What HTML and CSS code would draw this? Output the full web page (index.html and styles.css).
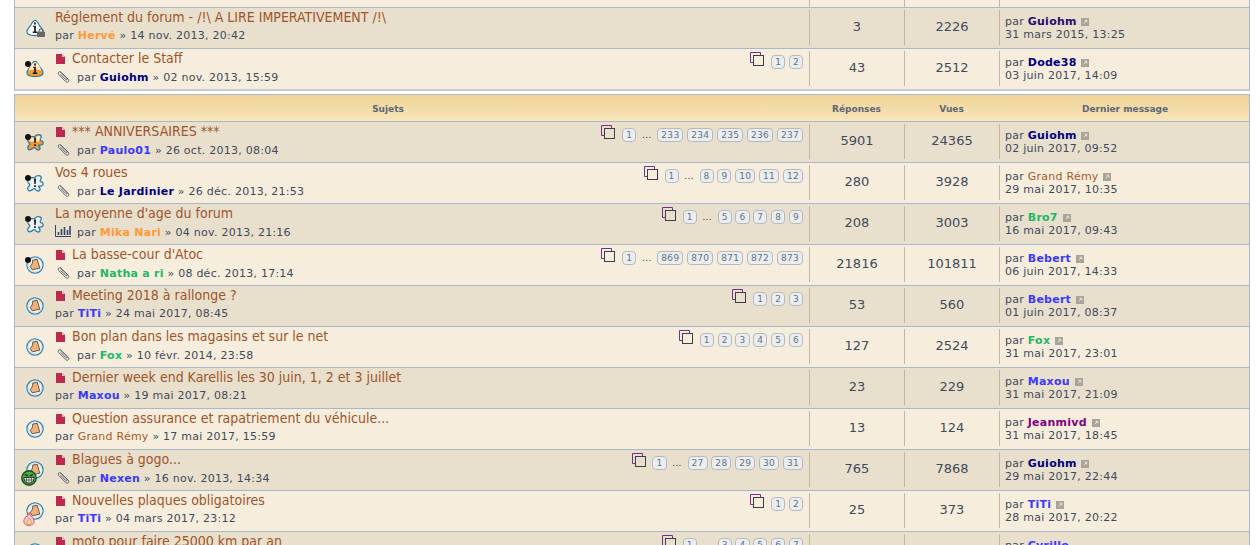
FILE: index.html
```html
<!DOCTYPE html>
<html lang="fr">
<head>
<meta charset="utf-8">
<title>Forum</title>
<link rel="stylesheet" href="styles.css">
</head>
<body>
<svg class="defs" aria-hidden="true">
  <symbol id="file" viewBox="0 0 9 10"><path d="M0 0H6L9 3V10H0Z" fill="#bc2a4d"/><path d="M6 0V3H9Z" fill="#eec4cc"/></symbol>
  <symbol id="clip" viewBox="0 0 13 13"><path d="M3 1.500 11.200 9.200C13 11.500 10.400 13.400 8.600 11.500L1.600 4.400C.4 2.800 2 .9 3.600 2L10 8.300C10.800 9.400 9.700 10.300 8.800 9.500L3.600 4.300" fill="none" stroke="#5d6670" stroke-width="1"/></symbol>
  <symbol id="poll" viewBox="0 0 16 12"><path d="M.5 0V11.500H16" fill="none" stroke="#38406e" stroke-width="1"/><path d="M3.500 7V10M6.500 4V10M9.500 2V10M12.500 5V10M15 1V10" fill="none" stroke="#38406e" stroke-width="1.600"/></symbol>
  <symbol id="copy" viewBox="0 0 14 14"><path d="M3.500 10.500H.5V.5H10.500V3.500" fill="none" stroke="#7b2d8b"/><rect x="3.500" y="3.500" width="10" height="10" fill="none" stroke="#3a3f4a"/></symbol>
  <symbol id="go" viewBox="0 0 9 9"><rect width="9" height="9" fill="#a9a39a"/><path d="M3 6 6 3M4 2.500H6.500V5" fill="none" stroke="#f2eee6"/></symbol>
  <symbol id="info" viewBox="0 0 20 20"><path d="M10 1.500C12 1.500 13 3.500 14.500 6.500C16 9 19 11.500 19 14C19 17 16 18.500 10 18.500C4 18.500 1 17 1 14C1 11.500 4 9 5.500 6.500C7 3.500 8 1.500 10 1.500Z" fill="#fbfbfb" stroke="#2a7ca8" stroke-width="1.300"/><path d="M8 7.500H11V14H12.500V15.500H7.500V14H9V9H8ZM9 4H11V6H9Z" fill="#222"/></symbol>
  <symbol id="info-hot" viewBox="0 0 20 20"><path d="M10 1.500C12 1.500 13 3.500 14.500 6.500C16 9 19 11.500 19 14C19 17 16 18.500 10 18.500C4 18.500 1 17 1 14C1 11.500 4 9 5.500 6.500C7 3.500 8 1.500 10 1.500Z" fill="#f79a2e" stroke="#2a7ca8" stroke-width="1.300"/><path d="M3 12C7 10 13 10 17 12C15 5 12 2.500 10 2.500C8 2.500 5 5 3 12Z" fill="#fde9c6"/><path d="M8 7.500H11V14H12.500V15.500H7.500V14H9V9H8ZM9 4H11V6H9Z" fill="#222"/></symbol>
  <symbol id="lock" viewBox="0 0 9 10"><path d="M2.500 4V2.500C2.500.5 6.500.5 6.500 2.500V4" fill="none" stroke="#555" stroke-width="1.200"/><rect y="4" width="9" height="6" rx="1" fill="#666"/></symbol>
  <symbol id="splat" viewBox="0 0 20 20"><path d="M4 5C6 3 8 5 10 3.500C12 1 17 1 17 4C17 6 15 7 16 8.500C18 8.500 20 10 18.500 12.500C17 14 15 13 14 13.500C14 15 17 16 15 18.500C13 19.500 11 18 10 16.500C8 15.500 6 19.500 3 18.500C1 17 2 14 4 13C5 11 2 10.500 2 8.500C2 6.500 3 6 4 5Z" fill="#eef1f3" stroke="#2a7ca8" stroke-width="1.400"/><path d="M8.800 5H11.200L10.800 11H9.200ZM9 12.500H11V14.500H9Z" fill="#222"/></symbol>
  <symbol id="splat-hot" viewBox="0 0 20 20"><path d="M4 5C6 3 8 5 10 3.500C12 1 17 1 17 4C17 6 15 7 16 8.500C18 8.500 20 10 18.500 12.500C17 14 15 13 14 13.500C14 15 17 16 15 18.500C13 19.500 11 18 10 16.500C8 15.500 6 19.500 3 18.500C1 17 2 14 4 13C5 11 2 10.500 2 8.500C2 6.500 3 6 4 5Z" fill="#f79a2e" stroke="#2a7ca8" stroke-width="1.400"/><path d="M4 6C6 4 8 6 10 5C12 3 16 2.500 16 4.500C16 6.500 14 8 15 9.500H4Z" fill="#fbe6c3"/><path d="M8.800 5H11.200L10.800 11H9.200ZM9 12.500H11V14.500H9Z" fill="#222"/></symbol>
  <symbol id="note" viewBox="0 0 20 20"><circle cx="10" cy="10" r="9" fill="#f6f3ea" stroke="#2f86b5" stroke-width="1.400"/><circle cx="10" cy="10" r="7.700" fill="none" stroke="#c9dde6" stroke-width="1"/><path d="M7.500 4.500 12.500 3.800 15.300 13.500 7 15.300 4.500 11.500C6.500 10.500 7.500 8 7.500 4.500Z" fill="#f0b27c" stroke="#5a4a3a" stroke-width="1"/></symbol>
  <symbol id="dot" viewBox="0 0 6 6"><circle cx="3" cy="3" r="3" fill="#111"/></symbol>
  <symbol id="grin" viewBox="0 0 16 16"><circle cx="8" cy="8" r="7.200" fill="#45b03e" stroke="#1d4d1a" stroke-width="1.400"/><path d="M3 7.500H13C13 11.500 11 13 8 13C5 13 3 11.500 3 7.500Z" fill="#fff" stroke="#111" stroke-width=".8"/><path d="M5.500 8V12.500M8 8V13M10.500 8V12.500M3 10H13" stroke="#111" stroke-width=".6"/><path d="M4 4.500 7 6M12 4.500 9 6" stroke="#111" stroke-width="1.200"/></symbol>
  <symbol id="flame" viewBox="0 0 14 16"><path d="M7 .5C8 4 12 6 13 10C13.500 13 11 15.500 7 15.500C3 15.500 .5 13 1 10C1.500 7 3 7 3.500 4.500C5 6 6.500 4 7 .5Z" fill="#f7c6c6" stroke="#d9476b"/><path d="M7 7C8 9 10 10 10 12C10 14 8 14.500 7 14.500C5 14.500 4 13 4.500 11.500C5.500 11 6.500 9.500 7 7Z" fill="#f5dc90" stroke="#e0602a" stroke-width=".6"/></symbol>
</svg>

<div class="page">
  <div class="block block-top">
    <div class="row row-clipped">
      <div class="topic"></div><div class="num"></div><div class="num"></div><div class="last"></div>
    </div>
    <div class="row alt">
      <div class="topic"><span class="state"><svg class="ic20"><use href="#info"/></svg><svg class="badge-lock"><use href="#lock"/></svg></span>
        <div class="text"><div class="title">Réglement du forum - /!\ A LIRE IMPERATIVEMENT /!\</div><div class="meta">par <b class="orange">Hervé</b> » 14 nov. 2013, 20:42</div></div></div>
      <div class="num">3</div><div class="num">2226</div>
      <div class="last"><div>par <b class="indigo">Guiohm</b> <svg class="go"><use href="#go"/></svg></div><div>31 mars 2015, 13:25</div></div>
    </div>
    <div class="row">
      <div class="topic"><span class="state"><svg class="ic20"><use href="#info-hot"/></svg><svg class="badge-dot"><use href="#dot"/></svg></span>
        <div class="text"><div class="title"><svg class="file"><use href="#file"/></svg>Contacter le Staff</div><div class="meta"><svg class="clip"><use href="#clip"/></svg>par <b class="navy">Guiohm</b> » 02 nov. 2013, 15:59</div></div>
        <div class="pages"><svg class="copy"><use href="#copy"/></svg><a>1</a><a>2</a></div></div>
      <div class="num">43</div><div class="num">2512</div>
      <div class="last"><div>par <b class="navy">Dode38</b> <svg class="go"><use href="#go"/></svg></div><div>03 juin 2017, 14:09</div></div>
    </div>
  </div>

  <div class="block">
    <div class="head"><div class="h-topic">Sujets</div><div class="h-num">Réponses</div><div class="h-num">Vues</div><div class="h-last">Dernier message</div></div>

    <div class="row alt">
      <div class="topic"><span class="state"><svg class="ic20"><use href="#splat-hot"/></svg><svg class="badge-dot"><use href="#dot"/></svg></span>
        <div class="text"><div class="title"><svg class="file"><use href="#file"/></svg>*** ANNIVERSAIRES ***</div><div class="meta"><svg class="clip"><use href="#clip"/></svg>par <b class="blue">Paulo01</b> » 26 oct. 2013, 08:04</div></div>
        <div class="pages"><svg class="copy"><use href="#copy"/></svg><a>1</a><i>...</i><a>233</a><a>234</a><a>235</a><a>236</a><a>237</a></div></div>
      <div class="num">5901</div><div class="num">24365</div>
      <div class="last"><div>par <b class="navy">Guiohm</b> <svg class="go"><use href="#go"/></svg></div><div>02 juin 2017, 09:52</div></div>
    </div>
    <div class="row">
      <div class="topic"><span class="state"><svg class="ic20"><use href="#splat"/></svg><svg class="badge-dot"><use href="#dot"/></svg></span>
        <div class="text"><div class="title">Vos 4 roues</div><div class="meta"><svg class="clip"><use href="#clip"/></svg>par <b class="navy">Le Jardinier</b> » 26 déc. 2013, 21:53</div></div>
        <div class="pages"><svg class="copy"><use href="#copy"/></svg><a>1</a><i>...</i><a>8</a><a>9</a><a>10</a><a>11</a><a>12</a></div></div>
      <div class="num">280</div><div class="num">3928</div>
      <div class="last"><div>par <span class="brown">Grand Rémy</span> <svg class="go"><use href="#go"/></svg></div><div>29 mai 2017, 10:35</div></div>
    </div>
    <div class="row alt">
      <div class="topic"><span class="state"><svg class="ic20"><use href="#splat"/></svg><svg class="badge-dot"><use href="#dot"/></svg></span>
        <div class="text"><div class="title">La moyenne d'age du forum</div><div class="meta"><svg class="poll"><use href="#poll"/></svg>par <b class="orange">Mika Nari</b> » 04 nov. 2013, 21:16</div></div>
        <div class="pages"><svg class="copy"><use href="#copy"/></svg><a>1</a><i>...</i><a>5</a><a>6</a><a>7</a><a>8</a><a>9</a></div></div>
      <div class="num">208</div><div class="num">3003</div>
      <div class="last"><div>par <b class="green">Bro7</b> <svg class="go"><use href="#go"/></svg></div><div>16 mai 2017, 09:43</div></div>
    </div>
    <div class="row">
      <div class="topic"><span class="state"><svg class="ic20"><use href="#note"/></svg><svg class="badge-dot"><use href="#dot"/></svg></span>
        <div class="text"><div class="title"><svg class="file"><use href="#file"/></svg>La basse-cour d'Atoc</div><div class="meta"><svg class="clip"><use href="#clip"/></svg>par <b class="green">Natha a ri</b> » 08 déc. 2013, 17:14</div></div>
        <div class="pages"><svg class="copy"><use href="#copy"/></svg><a>1</a><i>...</i><a>869</a><a>870</a><a>871</a><a>872</a><a>873</a></div></div>
      <div class="num">21816</div><div class="num">101811</div>
      <div class="last"><div>par <b class="blue">Bebert</b> <svg class="go"><use href="#go"/></svg></div><div>06 juin 2017, 14:33</div></div>
    </div>
    <div class="row alt">
      <div class="topic"><span class="state"><svg class="ic20"><use href="#note"/></svg></span>
        <div class="text"><div class="title"><svg class="file"><use href="#file"/></svg>Meeting 2018 à rallonge ?</div><div class="meta">par <b class="blue">TiTi</b> » 24 mai 2017, 08:45</div></div>
        <div class="pages"><svg class="copy"><use href="#copy"/></svg><a>1</a><a>2</a><a>3</a></div></div>
      <div class="num">53</div><div class="num">560</div>
      <div class="last"><div>par <b class="blue">Bebert</b> <svg class="go"><use href="#go"/></svg></div><div>01 juin 2017, 08:37</div></div>
    </div>
    <div class="row">
      <div class="topic"><span class="state"><svg class="ic20"><use href="#note"/></svg></span>
        <div class="text"><div class="title"><svg class="file"><use href="#file"/></svg>Bon plan dans les magasins et sur le net</div><div class="meta"><svg class="clip"><use href="#clip"/></svg>par <b class="green">Fox</b> » 10 févr. 2014, 23:58</div></div>
        <div class="pages"><svg class="copy"><use href="#copy"/></svg><a>1</a><a>2</a><a>3</a><a>4</a><a>5</a><a>6</a></div></div>
      <div class="num">127</div><div class="num">2524</div>
      <div class="last"><div>par <b class="green">Fox</b> <svg class="go"><use href="#go"/></svg></div><div>31 mai 2017, 23:01</div></div>
    </div>
    <div class="row alt">
      <div class="topic"><span class="state"><svg class="ic20"><use href="#note"/></svg></span>
        <div class="text"><div class="title"><svg class="file"><use href="#file"/></svg>Dernier week end Karellis les 30 juin, 1, 2 et 3 juillet</div><div class="meta">par <b class="blue">Maxou</b> » 19 mai 2017, 08:21</div></div></div>
      <div class="num">23</div><div class="num">229</div>
      <div class="last"><div>par <b class="blue">Maxou</b> <svg class="go"><use href="#go"/></svg></div><div>31 mai 2017, 21:09</div></div>
    </div>
    <div class="row">
      <div class="topic"><span class="state"><svg class="ic20"><use href="#note"/></svg></span>
        <div class="text"><div class="title"><svg class="file"><use href="#file"/></svg>Question assurance et rapatriement du véhicule...</div><div class="meta">par <span class="brown">Grand Rémy</span> » 17 mai 2017, 15:59</div></div></div>
      <div class="num">13</div><div class="num">124</div>
      <div class="last"><div>par <b class="purple">Jeanmivd</b> <svg class="go"><use href="#go"/></svg></div><div>31 mai 2017, 18:45</div></div>
    </div>
    <div class="row alt">
      <div class="topic"><span class="state"><svg class="ic20"><use href="#note"/></svg><svg class="badge-grin"><use href="#grin"/></svg></span>
        <div class="text"><div class="title"><svg class="file"><use href="#file"/></svg>Blagues à gogo...</div><div class="meta"><svg class="clip"><use href="#clip"/></svg>par <b class="blue">Nexen</b> » 16 nov. 2013, 14:34</div></div>
        <div class="pages"><svg class="copy"><use href="#copy"/></svg><a>1</a><i>...</i><a>27</a><a>28</a><a>29</a><a>30</a><a>31</a></div></div>
      <div class="num">765</div><div class="num">7868</div>
      <div class="last"><div>par <b class="navy">Guiohm</b> <svg class="go"><use href="#go"/></svg></div><div>29 mai 2017, 22:44</div></div>
    </div>
    <div class="row">
      <div class="topic"><span class="state"><svg class="ic20"><use href="#note"/></svg><svg class="badge-flame"><use href="#flame"/></svg></span>
        <div class="text"><div class="title"><svg class="file"><use href="#file"/></svg>Nouvelles plaques obligatoires</div><div class="meta">par <b class="blue">TiTi</b> » 04 mars 2017, 23:12</div></div>
        <div class="pages"><svg class="copy"><use href="#copy"/></svg><a>1</a><a>2</a></div></div>
      <div class="num">25</div><div class="num">373</div>
      <div class="last"><div>par <b class="blue">TiTi</b> <svg class="go"><use href="#go"/></svg></div><div>28 mai 2017, 20:22</div></div>
    </div>
    <div class="row alt">
      <div class="topic"><span class="state"><svg class="ic20"><use href="#note"/></svg></span>
        <div class="text"><div class="title"><svg class="file"><use href="#file"/></svg>moto pour faire 25000 km par an</div></div>
        <div class="pages"><svg class="copy"><use href="#copy"/></svg><a>1</a><i>...</i><a>3</a><a>4</a><a>5</a><a>6</a><a>7</a></div></div>
      <div class="num"></div><div class="num"></div>
      <div class="last"><div>par <b class="blue">Cyrillo</b></div></div>
    </div>
  </div>
</div>
</body>
</html>
```

FILE: styles.css
```css
html, body {
  margin: 0;
  height: 545px;
  overflow: hidden;
  background: #fff;
}
body {
  font-family: "DejaVu Sans", Verdana, sans-serif;
  font-size: 11px;
  letter-spacing: .25px;
  line-height: 13px;
  color: #3f4a5c;
}
.defs { width: 0; height: 0; display: block; }
.page { padding: 0 10px 0 14px; }
.block {
  border-left: 1px solid #a9b8c9;
  border-right: 1px solid #a9b8c9;
  border-top: 1px solid #a9b8c9;
  margin-top: 3px;
}
.block-top {
  margin-top: 0;
  border-top: 0;
  border-bottom: 2px solid #c5ccd3;
}
.block-top .row:last-child { border-bottom: 0; height: 40px; }
.row {
  display: grid;
  grid-template-columns: 794px 95px 95px 250px;
  height: 40px;
  border-bottom: 1px solid #a9b8c9;
  background: #f7eddd;
}
.row.alt { background: #e9dfcd; }
.row-clipped { height: 7px; overflow: hidden; }
.head {
  display: grid;
  grid-template-columns: 794px 95px 95px 250px;
  height: 26px;
  border-bottom: 1px solid #a9b8c9;
  background: linear-gradient(#eed294, #f9e6bc);
  font-size: 9px;
  font-weight: 700;
  letter-spacing: 0;
  line-height: 28px;
  color: #5c6678;
  text-align: center;
}
.h-topic { padding-right: 48px; }
.h-last { padding-left: 2px; }
.topic {
  display: flex;
  align-items: flex-start;
  min-width: 0;
  padding: 1px 6px 0 11px;
}
.state {
  flex: none;
  width: 18px;
  height: 18px;
  margin: 10px 11px 0 0;
  position: relative;
}
.ic20 { width: 18px; height: 18px; display: block; }
.badge-lock { position: absolute; left: 11px; top: 9px; width: 8px; height: 9px; }
.badge-dot { position: absolute; left: -1px; top: 1px; width: 6px; height: 6px; }
.badge-grin { position: absolute; left: -5px; top: 9px; width: 16px; height: 16px; }
.badge-flame { position: absolute; left: -3px; top: 9px; width: 12px; height: 16px; }
.text { flex: 1; min-width: 0; }
.title {
  font-family: "DejaVu Sans Condensed", "DejaVu Sans", sans-serif;
  font-size: 14px;
  letter-spacing: 0;
  line-height: 16px;
  color: #a0552a;
  white-space: nowrap;
}
.meta { margin-top: 4px; white-space: nowrap; }
.file { width: 9px; height: 10px; margin: 0 7px 0 1px; vertical-align: -1px; }
.clip { width: 13px; height: 13px; margin: 0 7px 0 2px; vertical-align: -2px; }
.poll { width: 16px; height: 12px; margin: 0 6px 0 0; vertical-align: -1px; }
.pages {
  flex: none;
  display: flex;
  align-items: flex-start;
  gap: 3.8px;
  padding-top: 5px;
  font-size: 9px;
  letter-spacing: .3px;
}
.pages a {
  border: 1px solid #b4bac0;
  border-radius: 4px;
  background: #ecedee;
  color: #5c758c;
  padding: 0 3px;
  height: 12px;
  line-height: 12px;
}
.pages i { font-style: normal; width: 13.4px; text-align: center; padding-top: 2px; line-height: 10px; color: #333; }
.copy { width: 14px; height: 14px; margin: -3px 3.200px 0 0; flex: none; }
.num,
.last { margin: 2px 0 3px; border-left: 1px solid #c4b5a3; }
.num {
  font-size: 13px;
  letter-spacing: 0;
  line-height: 34px;
  text-align: center;
}
.last { padding: 5px 0 0 5px; white-space: nowrap; overflow: hidden; }
.row-clipped .num, .row-clipped .last { margin: 0; height: 7px; }
.go { width: 8px; height: 8px; margin-left: 1px; vertical-align: -1px; }
.orange { color: #ff9933; }
.navy { color: #00007f; }
.indigo { color: #2a0a6e; }
.blue { color: #3a3aff; }
.green { color: #1fb866; }
.purple { color: #800080; }
.brown { color: #a85a2a; }
```
